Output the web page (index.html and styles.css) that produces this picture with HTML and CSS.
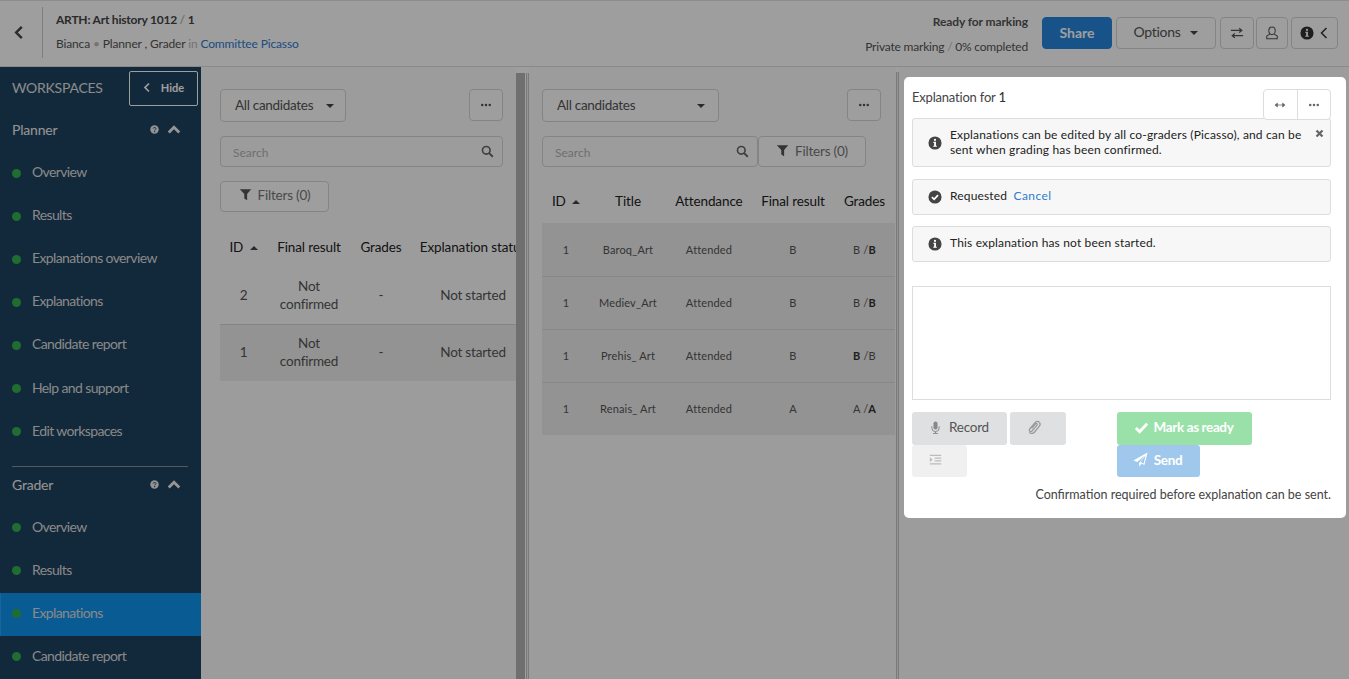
FILE: index.html
```html
<!DOCTYPE html>
<html lang="en">
<head>
  <meta charset="UTF-8" />
  <meta name="viewport" content="width=device-width, initial-scale=1.0"/>
  <title>Explanation for 1</title>
  <link rel="stylesheet" href="styles.css">
</head>
<body>
  <svg class="sprite" aria-hidden="true">
    <symbol id="i-left" viewBox="0 0 12 16"><path d="M9 2 3 8l6 6" fill="none" stroke="currentColor" stroke-width="2.6"/></symbol>
    <symbol id="i-left-thin" viewBox="0 0 12 16"><path d="M9 2 3 8l6 6" fill="none" stroke="currentColor" stroke-width="1.8"/></symbol>
    <symbol id="i-up" viewBox="0 0 16 12"><path d="M2 9.5 8 3.5l6 6" fill="none" stroke="currentColor" stroke-width="3.2"/></symbol>
    <symbol id="i-filter" viewBox="0 0 16 16"><path d="M1 1.5h14L10 7.5V15L6.5 13V7.5z" fill="currentColor"/></symbol>
    <symbol id="i-search" viewBox="0 0 16 16"><circle cx="6.5" cy="6.5" r="4.7" fill="none" stroke="currentColor" stroke-width="2"/><path d="m10 10 4.5 4.5" stroke="currentColor" stroke-width="2.4"/></symbol>
    <symbol id="i-dots" viewBox="0 0 16 16"><circle cx="3" cy="8" r="1.7" fill="currentColor"/><circle cx="8" cy="8" r="1.7" fill="currentColor"/><circle cx="13" cy="8" r="1.7" fill="currentColor"/></symbol>
    <symbol id="i-info" viewBox="0 0 16 16"><circle cx="8" cy="8" r="7.5" fill="currentColor"/><rect x="6.9" y="3.3" width="2.2" height="2.2" fill="#fff"/><path d="M6.2 6.7h2.9v4.3h1v1.3H6v-1.3h1V8H6.2z" fill="#fff"/></symbol>
    <symbol id="i-check-circle" viewBox="0 0 16 16"><circle cx="8" cy="8" r="7.5" fill="currentColor"/><path d="m4.5 8.2 2.5 2.5 4.5-4.8" fill="none" stroke="#fff" stroke-width="2"/></symbol>
    <symbol id="i-help" viewBox="0 0 16 16"><circle cx="8" cy="8" r="7.5" fill="currentColor"/><path d="M5.6 6.2C5.8 3.7 10.5 3.8 10.5 6.3 10.5 8 8.2 8 8.2 9.6" fill="none" stroke="#1d425f" stroke-width="1.7"/><rect x="7.2" y="10.8" width="2" height="2" fill="#1d425f"/></symbol>
    <symbol id="i-swap" viewBox="0 0 16 16"><path d="M1 5h12M10.5 2.5 13.5 5l-3 2.5M15 11H3M5.5 8.5 2.5 11l3 2.5" fill="none" stroke="currentColor" stroke-width="1.4"/></symbol>
    <symbol id="i-user" viewBox="0 0 16 16"><ellipse cx="8" cy="5.5" rx="3.7" ry="4.3" fill="none" stroke="currentColor" stroke-width="1.2"/><path d="M5.5 9.3 2 11.5V14.500H14V11.500L10.500 9.300" fill="none" stroke="currentColor" stroke-width="1.2"/></symbol>
    <symbol id="i-resize" viewBox="0 0 16 16"><path d="M2 8h12M4.5 5.5 1.5 8l3 2.500zM11.500 5.500l3 2.500-3 2.500z" fill="currentColor" stroke="currentColor" stroke-width="1"/></symbol>
    <symbol id="i-close" viewBox="0 0 12 12"><path d="m2 2 8 8M10 2l-8 8" stroke="currentColor" stroke-width="3"/></symbol>
    <symbol id="i-mic" viewBox="0 0 12 16"><rect x="3.5" y="0.5" width="5" height="10" rx="2.5" fill="currentColor"/><path d="M1.5 6.5v2a4.500 4.500 0 0 0 9 0v-2M6 13v2M3 15.300h6" fill="none" stroke="currentColor" stroke-width="1.2"/></symbol>
    <symbol id="i-clip" viewBox="0 0 16 16"><path d="M13.5 3.5c-1.3-1.700-3-1.500-4.200-.1L3.700 10c-1.300 1.600.8 3.500 2.300 2l5-5.800c.9-1.100-.5-2.300-1.500-1.300L5.600 9.400" fill="none" stroke="currentColor" stroke-width="1.3"/><path d="M13.5 3.500c1.100 1.400.7 2.700-.3 3.900L8.600 13c-1.600 1.800-4 2-5.300.3" fill="none" stroke="currentColor" stroke-width="1.3"/></symbol>
    <symbol id="i-indent" viewBox="0 0 16 16"><path d="M1 2h14v1.600H1zM7 5.500h8v1.600H7zM7 9h8v1.600H7zM1 12.700h14v1.600H1zM1 5.300l3.500 2.900L1 11z" fill="currentColor"/></symbol>
    <symbol id="i-check" viewBox="0 0 16 16"><path d="m2 8.500 4 4 8-8.500" fill="none" stroke="currentColor" stroke-width="3"/></symbol>
    <symbol id="i-plane" viewBox="0 0 16 16"><path d="M15.500.5.500 9l4 1.700 8-7-6 8v3.800l2.700-3 3 1.400zM13.300 3.800l-1.800 8.400-3.600-1.600z" fill="currentColor" fill-rule="evenodd"/></symbol>
  </svg>

  <div class="page">
    <header class="topbar">
      <button class="back-btn"><svg class="icon icon-back"><use href="#i-left"/></svg></button>
      <div class="course">
        <div class="course-title">ARTH: Art history 1012 <span class="faint">/</span> 1</div>
        <div class="course-meta">Bianca <span class="faint">•</span> Planner , Grader <span class="faint">in</span> <a href="#">Committee Picasso</a></div>
      </div>
      <div class="status">
        <div class="status-top">Ready for marking</div>
        <div class="status-line">Private marking <span class="faint">/</span> 0% completed</div>
      </div>
      <div class="top-actions">
        <button class="btn btn-share">Share</button>
        <button class="btn btn-options">Options <span class="caret"></span></button>
        <button class="btn btn-swap"><svg class="icon"><use href="#i-swap"/></svg></button>
        <button class="btn btn-user"><svg class="icon"><use href="#i-user"/></svg></button>
        <button class="btn btn-info"><svg class="icon"><use href="#i-info"/></svg><svg class="icon icon-chev"><use href="#i-left-thin"/></svg></button>
      </div>
    </header>

    <div class="main">
      <nav class="sidebar">
        <div class="side-head">
          <span class="side-title">WORKSPACES</span>
          <button class="hide-btn"><svg class="icon icon-hide"><use href="#i-left"/></svg>Hide</button>
        </div>

        <div class="group-head">
          <span>Planner</span>
          <svg class="icon icon-help"><use href="#i-help"/></svg>
          <svg class="icon icon-up"><use href="#i-up"/></svg>
        </div>
        <ul class="nav-list">
          <li>Overview</li>
          <li>Results</li>
          <li>Explanations overview</li>
          <li>Explanations</li>
          <li>Candidate report</li>
          <li>Help and support</li>
          <li>Edit workspaces</li>
        </ul>

        <div class="side-divider"></div>

        <div class="group-head">
          <span>Grader</span>
          <svg class="icon icon-help"><use href="#i-help"/></svg>
          <svg class="icon icon-up"><use href="#i-up"/></svg>
        </div>
        <ul class="nav-list nav-grader">
          <li>Overview</li>
          <li>Results</li>
          <li class="active">Explanations</li>
          <li>Candidate report</li>
        </ul>
      </nav>

      <section class="panel panel-one">
        <div class="tools">
          <button class="btn select-btn select-one">All candidates <span class="caret"></span></button>
          <button class="btn dots-btn"><svg class="icon"><use href="#i-dots"/></svg></button>
        </div>
        <div class="search search-wide">
          <span>Search</span>
          <svg class="icon"><use href="#i-search"/></svg>
        </div>
        <button class="btn filter-btn filter-below"><svg class="icon"><use href="#i-filter"/></svg>Filters (0)</button>
        <div class="table-clip">
          <table class="grid grid-one">
            <colgroup><col class="c47"><col class="c84"><col class="c60"><col class="c124"></colgroup>
            <thead>
              <tr><th>ID <span class="sort"></span></th><th>Final result</th><th>Grades</th><th>Explanation status</th></tr>
            </thead>
            <tbody>
              <tr><td>2</td><td>Not<br>confirmed</td><td>-</td><td>Not started</td></tr>
              <tr class="shaded"><td>1</td><td>Not<br>confirmed</td><td>-</td><td>Not started</td></tr>
            </tbody>
          </table>
        </div>
      </section>

      <div class="splitter"></div>

      <section class="panel panel-two">
        <div class="tools">
          <button class="btn select-btn select-two">All candidates <span class="caret"></span></button>
          <button class="btn dots-btn"><svg class="icon"><use href="#i-dots"/></svg></button>
        </div>
        <div class="search-row">
          <div class="search search-short">
            <span>Search</span>
            <svg class="icon"><use href="#i-search"/></svg>
          </div>
          <button class="btn filter-btn"><svg class="icon"><use href="#i-filter"/></svg>Filters (0)</button>
        </div>
        <table class="grid grid-two">
          <colgroup><col class="c48"><col class="c76"><col class="c86"><col class="c82"><col class="c61"></colgroup>
          <thead>
            <tr><th>ID <span class="sort"></span></th><th>Title</th><th>Attendance</th><th>Final result</th><th>Grades</th></tr>
          </thead>
          <tbody>
            <tr><td>1</td><td>Baroq_Art</td><td>Attended</td><td>B</td><td>B /<b>B</b></td></tr>
            <tr><td>1</td><td>Mediev_Art</td><td>Attended</td><td>B</td><td>B /<b>B</b></td></tr>
            <tr><td>1</td><td>Prehis_ Art</td><td>Attended</td><td>B</td><td><b>B</b> /B</td></tr>
            <tr><td>1</td><td>Renais_ Art</td><td>Attended</td><td>A</td><td>A /<b>A</b></td></tr>
          </tbody>
        </table>
      </section>

      <div class="rule"></div>
      <div class="panel-three"></div>
    </div>
  </div>

  <div class="overlay"></div>

  <aside class="card">
    <div class="card-head">
      <span>Explanation for <b>1</b></span>
      <div class="card-tools">
        <button><svg class="icon"><use href="#i-resize"/></svg></button>
        <button><svg class="icon"><use href="#i-dots"/></svg></button>
      </div>
    </div>

    <div class="note note-tall">
      <svg class="icon"><use href="#i-info"/></svg>
      <p>Explanations can be edited by all co-graders (Picasso), and can be sent when grading has been confirmed.</p>
      <svg class="icon icon-close"><use href="#i-close"/></svg>
    </div>
    <div class="note">
      <svg class="icon"><use href="#i-check-circle"/></svg>
      <p>Requested <a href="#">Cancel</a></p>
    </div>
    <div class="note">
      <svg class="icon"><use href="#i-info"/></svg>
      <p>This explanation has not been started.</p>
    </div>

    <div class="text-box"></div>

    <div class="card-actions">
      <div class="actions-left">
        <button class="act act-record"><svg class="icon"><use href="#i-mic"/></svg>Record</button>
        <button class="act act-clip"><svg class="icon"><use href="#i-clip"/></svg></button>
        <button class="act act-indent"><svg class="icon"><use href="#i-indent"/></svg></button>
      </div>
      <div class="actions-right">
        <button class="act act-ready"><svg class="icon"><use href="#i-check"/></svg>Mark as ready</button>
        <button class="act act-send"><svg class="icon"><use href="#i-plane"/></svg>Send</button>
      </div>
    </div>

    <p class="card-foot">Confirmation required before explanation can be sent.</p>
  </aside>
</body>
</html>
```

FILE: styles.css
```css
* {
  margin: 0;
  padding: 0;
  box-sizing: border-box;
}

html, body {
  height: 100%;
  width: 100%;
  overflow: hidden;
  font-family: Lato, 'Noto Sans', sans-serif;
  font-size: 13px;
  color: #333;
  background-color: #fff;
}

button {
  font-family: inherit;
  cursor: pointer;
}

a {
  color: #2f7bd0;
  text-decoration: none;
}

ul {
  list-style: none;
}

.sprite {
  display: none;
}

.icon {
  display: block;
  width: 14px;
  height: 14px;
  flex: none;
}

.faint {
  color: #bbb;
}

.page {
  height: 100vh;
  display: flex;
  flex-direction: column;
}

/* top bar */
.topbar {
  height: 67px;
  flex: none;
  display: flex;
  align-items: center;
  padding: 0 11px 2px 0;
  border-top: 1px solid #e4e4e4;
  border-bottom: 1px solid #ddd;
  background: #fff;
}

.back-btn {
  width: 43px;
  height: 51px;
  display: flex;
  align-items: center;
  justify-content: center;
  padding-right: 4px;
  background: none;
  border: none;
  border-right: 1px solid #ccc;
  color: #444;
}

.icon-back {
  width: 12px;
  height: 15px;
}

.course {
  margin: -2px 0 0 13px;
  font-size: 12px;
  flex: 1;
}

.course-title {
  font-weight: 700;
  color: #444;
  letter-spacing: -0.22px;
  margin-bottom: 9px;
}

.course-meta {
  color: #555;
  letter-spacing: -0.14px;
}

.status {
  font-size: 12px;
  color: #555;
  text-align: right;
  margin: 2px 14px 0 0;
}

.status-top {
  font-weight: 700;
  letter-spacing: -0.1px;
  margin-bottom: 10px;
}

.status-line {
  letter-spacing: -0.2px;
}

.top-actions {
  display: flex;
  gap: 4px;
}

.btn {
  display: flex;
  align-items: center;
  justify-content: center;
  height: 32px;
  border: 1px solid #d6d6d6;
  border-radius: 4px;
  background: #fff;
  color: #555;
  font-size: 14px;
}

.btn-share {
  width: 70px;
  padding-bottom: 1px;
  background: #2686dc;
  border-color: #2686dc;
  color: #fff;
  font-weight: 700;
}

.btn-options {
  width: 100px;
  padding-bottom: 2px;
  letter-spacing: -0.3px;
}

.btn-swap {
  width: 34px;
  margin-right: -2px;
}

.btn-user {
  width: 32px;
  margin-right: -1px;
}

.btn-info {
  width: 47px;
  gap: 5px;
  color: #333;
}

.icon-chev {
  width: 10px;
  height: 14px;
}

.caret {
  display: inline-block;
  margin: 3px 0 0 10px;
  border-left: 4px solid transparent;
  border-right: 4px solid transparent;
  border-top: 4px solid #444;
}

.main {
  flex: 1;
  display: flex;
  min-height: 0;
}

/* sidebar */
.sidebar {
  width: 201px;
  flex: none;
  background: #1d425f;
  color: #fff;
  overflow: hidden;
}

.side-head {
  height: 42px;
  display: flex;
  align-items: center;
  justify-content: space-between;
  padding: 0 3px 0 12px;
}

.side-title {
  margin-top: -2px;
  font-size: 14px;
  letter-spacing: -0.25px;
  color: #e0e0e0;
}

.hide-btn {
  width: 69px;
  height: 35px;
  display: flex;
  align-items: center;
  justify-content: center;
  gap: 10px;
  padding-bottom: 2px;
  background: none;
  border: 1px solid #fff;
  border-radius: 2px;
  color: #fff;
  font-size: 11px;
  font-weight: 700;
}

.icon-hide {
  width: 8px;
  height: 11px;
}

.group-head {
  height: 42px;
  display: flex;
  align-items: center;
  padding: 0 20px 2px 12px;
  font-size: 14px;
  letter-spacing: -0.2px;
  color: #f0f0f0;
}

.group-head span {
  flex: 1;
}

.icon-help {
  width: 9px;
  height: 9px;
  margin-right: 8px;
  color: #eee;
}

.icon-up {
  width: 14px;
  height: 11px;
  color: #f2f2f2;
}

.nav-list li {
  position: relative;
  height: 43.1px;
  display: flex;
  align-items: center;
  padding: 0 0 2px 32px;
  font-size: 14px;
  letter-spacing: -0.62px;
  color: #ddd;
}

.nav-list li::before {
  content: '';
  position: absolute;
  left: 12px;
  top: 50%;
  width: 9px;
  height: 9px;
  margin-top: -4px;
  border-radius: 50%;
  background: #33b04e;
}

.nav-grader li {
  padding-bottom: 4px;
}

.nav-grader li::before {
  margin-top: -5px;
}

.nav-list li.active {
  background: #0f94ee;
  box-shadow: inset 1px 0 0 #2aa3f5;
}

.side-divider {
  height: 1px;
  margin: 13px 13px 0 12px;
  background: #8b8f92;
}

.side-divider + .group-head {
  margin-top: -2px;
}

/* panels */
.panel {
  flex: none;
  padding-top: 22px;
  overflow: hidden;
}

.panel-one {
  width: 315px;
  padding-left: 19px;
  background: #fcfcfc;
}

.panel-two {
  width: 367px;
  padding-left: 13px;
  background: #fcfcfc;
}

.splitter {
  width: 13px;
  flex: none;
  margin-top: 6px;
  background: linear-gradient(to right, #b3b3b3 0 9px, #fff 9px 10px, #c4c4c4 10px 11px, #f0f0f0 11px 12px, #c4c4c4 12px 13px);
}

.rule {
  width: 3px;
  flex: none;
  margin-top: 5px;
  background: linear-gradient(to right, #c4c4c4 0 1px, #f0f0f0 1px 2px, #c4c4c4 2px);
}

.panel-three {
  flex: 1;
  background: #fcfcfc;
}

.tools {
  display: flex;
  justify-content: space-between;
  align-items: flex-start;
}

.panel-one .tools {
  width: 283px;
}

.panel-two .tools {
  width: 339px;
}

.select-btn {
  height: 33px;
  justify-content: flex-start;
  padding: 0 0 2px 14px;
  font-size: 13.5px;
  letter-spacing: -0.3px;
}

.select-one {
  width: 126px;
}

.select-one .caret {
  margin-left: 13px;
}

.select-two {
  width: 177px;
}

.select-two .caret {
  margin-left: 62px;
}

.dots-btn {
  width: 34px;
}

.dots-btn .icon {
  width: 12px;
  height: 12px;
}

.search {
  height: 31px;
  display: flex;
  align-items: center;
  justify-content: space-between;
  padding: 2px 8px 0 12px;
  border: 1px solid #d6d6d6;
  border-radius: 4px;
  font-size: 12px;
  color: #b4b4b4;
}

.search .icon {
  width: 13px;
  height: 13px;
  margin-top: -2px;
  color: #666;
}

.search-wide {
  width: 283px;
  margin-top: 14px;
}

.search-row {
  display: flex;
  margin-top: 14px;
}

.search-short {
  width: 216px;
}

.filter-btn {
  width: 108px;
  height: 31px;
  gap: 6px;
  padding-bottom: 2px;
  color: #777;
  font-size: 13.5px;
  letter-spacing: -0.2px;
}

.filter-btn .icon {
  width: 13px;
  height: 13px;
  color: #555;
}

.filter-below {
  width: 109px;
  margin-top: 14px;
  padding-bottom: 4px;
}

.table-clip {
  overflow: hidden;
}

.grid {
  border-collapse: collapse;
  table-layout: fixed;
}

.grid-one {
  width: 315px;
}

.grid-two {
  width: 353px;
}

.c47 { width: 47px; }
.c48 { width: 48px; }
.c60 { width: 60px; }
.c61 { width: 61px; }
.c76 { width: 76px; }
.c82 { width: 82px; }
.c84 { width: 84px; }
.c86 { width: 86px; }
.c124 { width: 124px; }

.grid th {
  font-size: 13.5px;
  font-weight: 400;
  letter-spacing: -0.1px;
  color: #222;
  white-space: nowrap;
  text-align: center;
  overflow: hidden;
}

.grid-one th {
  height: 56px;
  padding-top: 14px;
}

.grid-two th {
  height: 56px;
  padding-top: 12px;
}

.grid td {
  text-align: center;
  color: #555;
}

.grid-one td {
  height: 56px;
  padding-bottom: 2px;
  font-size: 13.5px;
  line-height: 18px;
  letter-spacing: -0.2px;
}

.grid-one tr.shaded td {
  height: 57px;
  background: #eee;
  border-top: 1px solid #d6d6d6;
}

.grid-two td {
  height: 53px;
  font-size: 11px;
  letter-spacing: 0.15px;
  background: #ededed;
  border-top: 1px solid #dcdcdc;
}

.grid-two tr:first-child td {
  border-top: none;
}

.grid-two b {
  font-weight: 700;
  color: #333;
}

.sort {
  display: inline-block;
  margin: 0 0 2px 3px;
  border-left: 4px solid transparent;
  border-right: 4px solid transparent;
  border-bottom: 4px solid #444;
}

/* modal */
.overlay {
  position: fixed;
  inset: 0;
  background: rgba(0, 0, 0, 0.38);
}

.card {
  position: fixed;
  left: 904px;
  top: 77px;
  width: 442px;
  height: 441px;
  padding: 12px 15px 0 8px;
  background: #fff;
  border-radius: 5px;
}

.card-head {
  height: 29px;
  display: flex;
  justify-content: space-between;
  align-items: flex-start;
  font-size: 13px;
  letter-spacing: -0.2px;
  color: #444;
}

.card-head b {
  font-weight: 500;
  color: #333;
}

.card-tools {
  position: relative;
  display: flex;
  width: 68px;
  height: 31px;
  background: #fff;
  border: 1px solid #ddd;
  border-radius: 4px;
}

.card-tools button {
  flex: 1;
  display: flex;
  align-items: center;
  justify-content: center;
  background: none;
  border: none;
  color: #666;
}

.card-tools button + button {
  border-left: 1px solid #ddd;
}

.card-tools .icon {
  width: 12px;
  height: 12px;
}

.note {
  display: flex;
  align-items: center;
  gap: 8px;
  height: 36px;
  margin-bottom: 11px;
  padding: 0 6px 0 15px;
  background: #f7f7f7;
  border: 1px solid #ddd;
  border-radius: 3px;
  font-size: 12px;
  line-height: 15px;
  color: #222;
}

.note > .icon {
  color: #444;
}

.note p {
  flex: 1;
  padding-bottom: 3px;
  letter-spacing: 0.16px;
}

.note p a {
  margin-left: 3px;
  letter-spacing: 0.45px;
}

.note-tall {
  height: 49px;
  margin-bottom: 12px;
}

.note-tall p {
  padding-bottom: 2px;
}

.note .icon-close {
  width: 9px;
  height: 9px;
  align-self: flex-start;
  margin: 10px 0 0 -2px;
  color: #666;
}

.text-box {
  height: 114px;
  margin: 24px 0 12px;
  border: 1px solid #ddd;
}

.card-actions {
  display: flex;
}

.actions-left {
  width: 205px;
  flex: none;
  display: flex;
  flex-wrap: wrap;
  align-content: flex-start;
  column-gap: 3px;
}

.actions-right {
  display: flex;
  flex-direction: column;
  align-items: flex-start;
}

.act {
  height: 33px;
  display: flex;
  align-items: center;
  justify-content: center;
  padding-bottom: 3px;
  border: none;
  border-radius: 3px;
  font-size: 13.5px;
}

.act .icon {
  width: 13px;
  height: 13px;
}

.act-record {
  width: 95px;
  gap: 7px;
  padding-right: 1px;
  background: #dfe0e2;
  color: #555;
  letter-spacing: -0.25px;
}

.act-record .icon {
  color: #888;
}

.act-clip {
  width: 56px;
  padding-right: 8px;
  background: #dfe0e2;
  color: #999;
}

.act-clip .icon {
  width: 16px;
  height: 16px;
}

.act-indent {
  width: 55px;
  height: 32px;
  padding-right: 8px;
  background: #f0f0f0;
  color: #bbb;
}

.act-ready {
  width: 135px;
  gap: 5px;
  padding-right: 2px;
  background: #9ae1a9;
  color: #fff;
  font-weight: 700;
  letter-spacing: -0.38px;
}

.act-ready .icon {
  width: 15px;
  height: 15px;
}

.act-send {
  width: 83px;
  height: 32px;
  gap: 6px;
  padding-right: 2px;
  background: #9fc8ec;
  color: #fff;
  font-weight: 700;
  letter-spacing: -0.3px;
}

.act-send .icon {
  width: 15px;
  height: 15px;
}

.card-foot {
  margin-top: 10px;
  text-align: right;
  font-size: 12.5px;
  color: #444;
}
```
